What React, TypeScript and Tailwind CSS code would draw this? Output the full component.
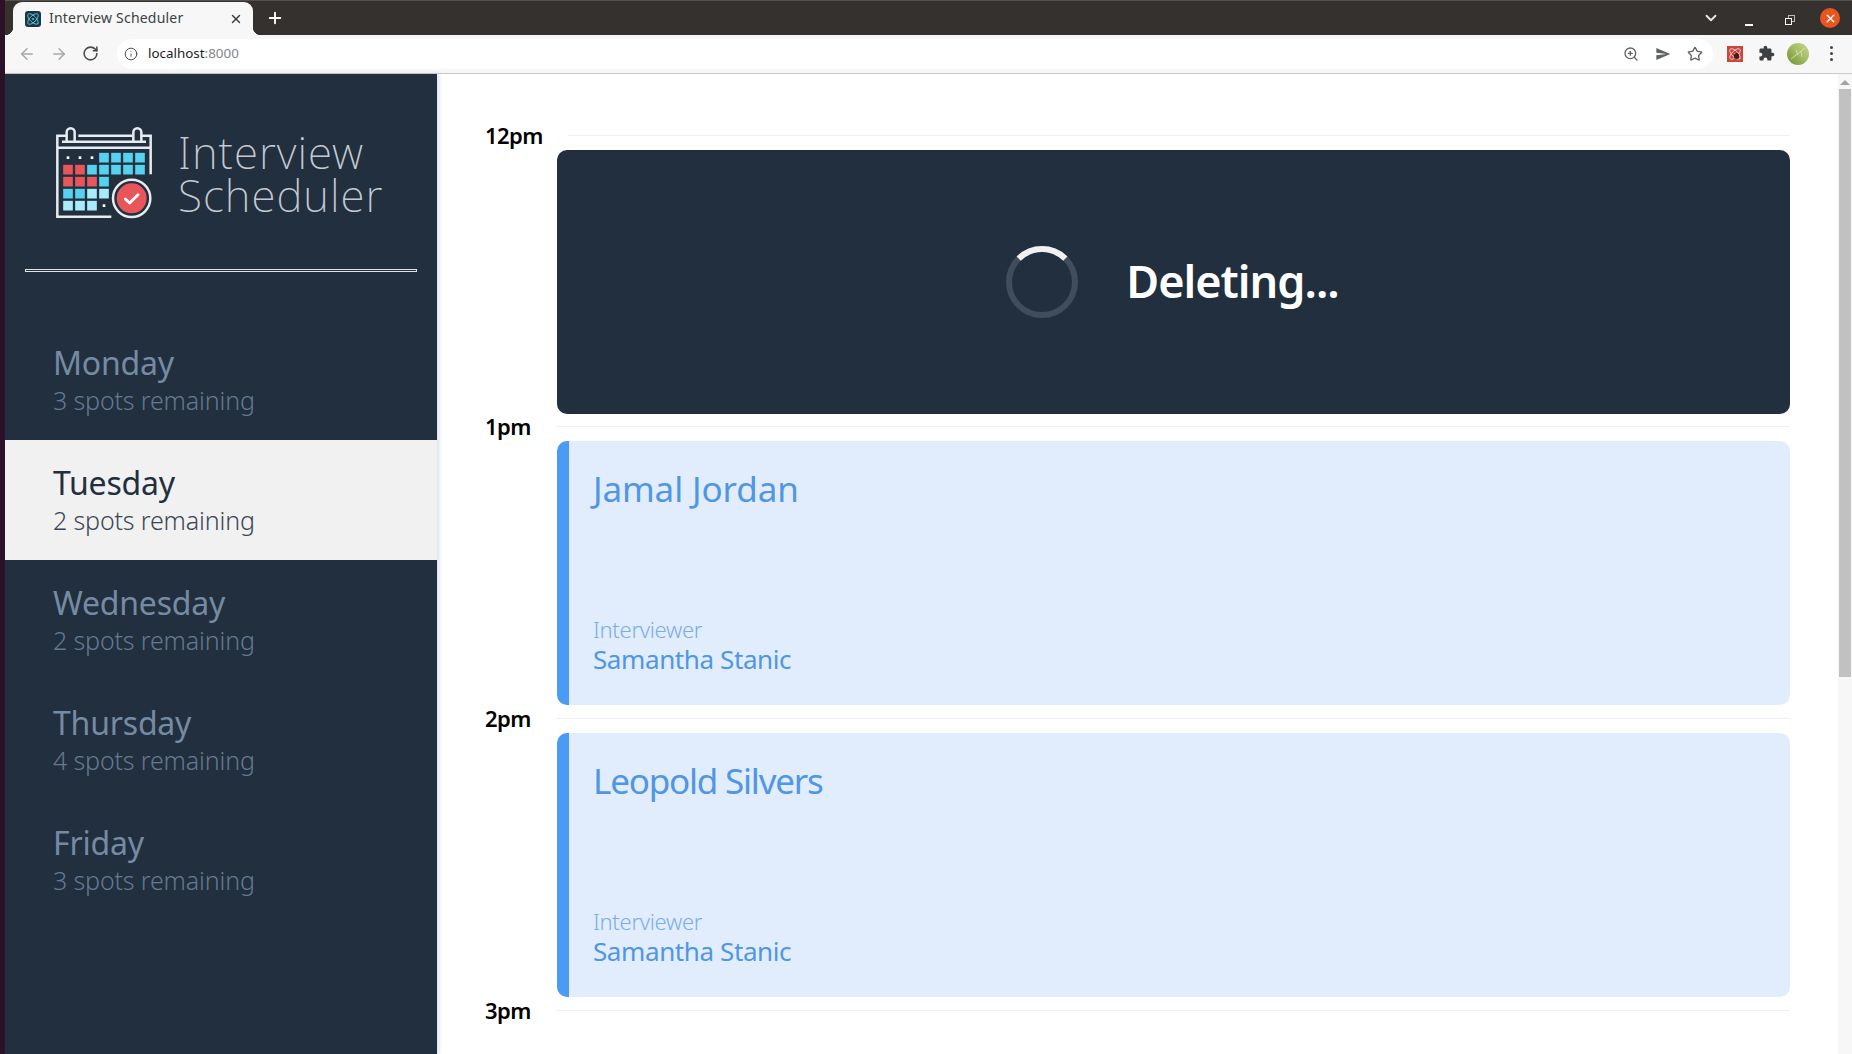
import { Atom, ArrowLeft, ArrowRight, RotateCw, Info, ZoomIn, Star, Plus, X, ChevronDown } from 'lucide-react'

const DAYS = [
  { name: 'Monday', spots: 3 },
  { name: 'Tuesday', spots: 2, selected: true },
  { name: 'Wednesday', spots: 2 },
  { name: 'Thursday', spots: 4 },
  { name: 'Friday', spots: 3 },
]

const COLS = [84, 120, 156, 192, 228, 264, 300]
const ROWS = [128, 164, 200, 236, 272]
const CYAN = '#56d2ee'
const RED = '#e8555a'
const PALE = '#a8ecfa'
const LOGO_CELLS: [number, number, string][] = [
  [3, 0, CYAN], [4, 0, CYAN], [5, 0, CYAN], [6, 0, CYAN],
  [0, 1, RED], [1, 1, RED], [2, 1, CYAN], [3, 1, CYAN], [4, 1, CYAN], [5, 1, CYAN], [6, 1, CYAN],
  [0, 2, RED], [1, 2, RED], [2, 2, RED], [3, 2, CYAN],
  [0, 3, CYAN], [1, 3, CYAN], [2, 3, PALE], [3, 3, PALE],
  [0, 4, PALE], [1, 4, PALE], [2, 4, PALE],
]

const Logo = () => (
  <svg width="98" height="92" viewBox="45 36 294 276" className="shrink-0">
    <g fill="none" stroke="#e6ecef" strokeWidth="7.5">
      <path d="M214 305H52V62H80M115 62H276M306 62H332V178" />
      <path d="M52 98H332" />
      <path d="M80 80V52a12 12 0 0 1 24 0V80M280 80V52a12 12 0 0 1 24 0V80" />
      <path d="M66 80H318" />
    </g>
    {LOGO_CELLS.map(([c, r, fill]) => (
      <rect key={`${c}-${r}`} x={COLS[c] - 14.5} y={ROWS[r] - 14.5} width="29" height="29" fill={fill} />
    ))}
    <g fill="#fff">
      <rect x="80" y="124" width="8" height="8" />
      <rect x="116" y="124" width="8" height="8" />
      <rect x="152" y="124" width="8" height="8" />
      <rect x="188" y="268" width="8" height="8" />
    </g>
    <circle cx="275" cy="250" r="63" fill="#222f3e" />
    <circle cx="275" cy="250" r="56" fill="none" stroke="#e6ecef" strokeWidth="7.5" />
    <circle cx="275" cy="250" r="45" fill={RED} />
    <path d="M256 252l13 12 25-25" fill="none" stroke="#fff" strokeWidth="8.5" strokeLinecap="round" strokeLinejoin="round" />
  </svg>
)

const Spinner = () => (
  <svg width="72" height="72" viewBox="0 0 72 72" className="shrink-0">
    <circle cx="36" cy="36" r="33" fill="none" stroke="#414d5b" strokeWidth="6" />
    <path d="M12.7 12.7A33 33 0 0 1 59.3 12.7" fill="none" stroke="#f1f1f1" strokeWidth="6" />
  </svg>
)

const ChromeBar = () => (
  <>
    <div className="flex h-[35px] items-end bg-[#35312f] border-t border-[#55514f]">
      <div className="relative ml-[8px] flex h-[33px] w-[240px] items-center rounded-t-[9px] bg-[#f7f7f7] pl-[12px] pr-[10px]">
        <div className="absolute bottom-0 left-[-8px] h-[8px] w-[8px] bg-[radial-gradient(circle_at_0_0,#35312f_8px,#f7f7f7_8.5px)]" />
        <div className="absolute bottom-0 right-[-8px] h-[8px] w-[8px] bg-[radial-gradient(circle_at_100%_0,#35312f_8px,#f7f7f7_8.5px)]" />
        <div className="flex h-[16px] w-[16px] items-center justify-center rounded-[3px] bg-[#1d3540]">
          <Atom size={14} strokeWidth={1.5} className="text-[#61dafb]" />
        </div>
        <span className="ml-[8px] flex-1 pb-[1px] text-[14px] leading-none tracking-[0.2px] text-[#3c4043]">Interview Scheduler</span>
        <X size={14} strokeWidth={2.5} className="text-[#3c4043]" />
      </div>
      <Plus size={18} strokeWidth={2.5} className="mb-[8px] ml-[13px] text-white" />
      <div className="flex-1" />
      <ChevronDown size={18} strokeWidth={2.5} className="mb-[8px] text-[#e8e8e8]" />
      <div className="mb-[9px] ml-[25px] h-[2px] w-[8px] bg-white" />
      <div className="relative mb-[10px] ml-[32px] h-[10px] w-[10px]">
        <div className="absolute right-0 top-0 h-[7px] w-[7px] border border-[#bbb]" />
        <div className="absolute bottom-0 left-0 h-[7px] w-[7px] border border-white bg-[#35312f]" />
      </div>
      <div className="mb-[7px] ml-[25px] mr-[12px] flex h-[20px] w-[20px] items-center justify-center rounded-full bg-[#e95420]">
        <X size={13} strokeWidth={2.5} className="text-white" />
      </div>
    </div>
    <div className="flex h-[39px] items-center border-b border-[#c9c9c9] bg-[#f7f7f7] pb-[1px]">
      <ArrowLeft size={18} strokeWidth={2} className="ml-[13px] text-[#a8a8a8]" />
      <ArrowRight size={18} strokeWidth={2} className="ml-[14px] text-[#a8a8a8]" />
      <RotateCw size={17} strokeWidth={2.2} className="ml-[14px] text-[#4a4a4a]" />
      <div className="ml-[18px] flex h-[30px] flex-1 items-center rounded-full bg-white pl-[7px] pr-[10px]">
        <Info size={14} strokeWidth={1.6} className="text-[#444]" />
        <span className="ml-[10px] flex-1 text-[13.4px] leading-none text-[#202124]">
          localhost<span className="text-[#80868b]">:8000</span>
        </span>
        <ZoomIn size={16} strokeWidth={2} className="text-[#5f6368]" />
        <svg width="16" height="16" viewBox="0 0 24 24" className="ml-[16px]">
          <path d="M2 21L23 12 2 3v7l15 2-15 2z" fill="#5f6368" />
        </svg>
        <Star size={16} strokeWidth={2} className="ml-[16px] text-[#5f6368]" />
      </div>
      <div className="relative ml-[14px] flex h-[16px] w-[16px] items-center justify-center bg-[#c9483d]">
        <Atom size={14} strokeWidth={1.5} className="text-[#f6dcd8]" />
        <div className="absolute bottom-[3px] right-[4px] h-[6px] w-[5px] rounded-full bg-[#3a1f1c]" />
      </div>
      <svg width="17" height="17" viewBox="0 0 24 24" className="ml-[15px]">
        <path
          d="M20.5 11H19V7c0-1.1-.9-2-2-2h-4V3.5C13 2.12 11.88 1 10.5 1S8 2.12 8 3.5V5H4c-1.1 0-1.99.9-1.99 2v3.8H3.5c1.49 0 2.7 1.21 2.7 2.7s-1.21 2.7-2.7 2.7H2V20c0 1.1.9 2 2 2h3.8v-1.5c0-1.49 1.21-2.7 2.7-2.7 1.49 0 2.7 1.21 2.7 2.7V22H17c1.1 0 2-.9 2-2v-4h1.5c1.38 0 2.5-1.12 2.5-2.5S21.88 11 20.5 11z"
          fill="#3c4043"
        />
      </svg>
      <svg width="22" height="22" viewBox="0 0 22 22" className="ml-[12px]">
        <defs>
          <linearGradient id="leaf" x1="0" y1="1" x2="1" y2="0">
            <stop offset="0" stopColor="#6f8f2e" />
            <stop offset="0.55" stopColor="#a3bd66" />
            <stop offset="1" stopColor="#c9d89a" />
          </linearGradient>
        </defs>
        <circle cx="11" cy="11" r="11" fill="url(#leaf)" />
        <path d="M4 16L18 5M9 7l2 5M15 14l-1-6" stroke="#dde7ba" strokeWidth="0.8" fill="none" />
      </svg>
      <div className="ml-[21px] mr-[19px] flex flex-col gap-[3px]">
        <div className="h-[3px] w-[3px] rounded-full bg-[#444]" />
        <div className="h-[3px] w-[3px] rounded-full bg-[#444]" />
        <div className="h-[3px] w-[3px] rounded-full bg-[#444]" />
      </div>
    </div>
  </>
)

const DayItem = ({ name, spots, selected }: { name: string; spots: number; selected?: boolean }) => (
  <li className={`flex h-[120px] flex-col justify-center pl-[48px] ${selected ? 'bg-[#f1f1f2] text-[#222f3e]' : 'text-[#758ba3]'}`}>
    <h2 className="text-[32px] font-normal leading-[39px] tracking-[-0.2px]">{name}</h2>
    <h3 className={`mt-[2px] text-[25px] font-light leading-[33px] tracking-[-0.15px] ${selected ? 'text-[#3a4655]' : 'text-[#64798f]'}`}>{spots} spots remaining</h3>
  </li>
)

const SlotHeader = ({ time }: { time: string }) => (
  <div className="mb-[7px] flex h-[16px] items-center gap-[25px]">
    <span className="text-[22px] font-semibold leading-none tracking-[-0.6px] text-black">{time}</span>
    <div className="h-px flex-1 bg-[#f0f0f0]" />
  </div>
)

const Booked = ({ student, nameClass }: { student: string; nameClass: string }) => (
  <div className="mb-[5px] ml-[72px] flex h-[264px] flex-col justify-between rounded-[10px] border-l-[12px] border-[#4a9bf5] bg-[#e1edfc] pb-[31px] pl-[24px] pt-[23px] text-[#5096e4]">
    <h2 className={`text-[35px] font-normal leading-[50px] ${nameClass}`}>{student}</h2>
    <div>
      <h4 className="text-[22px] font-light leading-[30px] tracking-[-0.3px] text-[#7aaee8]">Interviewer</h4>
      <h3 className="text-[26px] font-normal leading-[30px] tracking-[-0.4px]">Samantha Stanic</h3>
    </div>
  </div>
)

export default function App() {
  return (
    <div className="flex h-[1054px] w-[1852px] overflow-hidden bg-white font-['Noto_Sans',sans-serif]">
      <div className="w-[5px] shrink-0 bg-[#2c1128]" />
      <div className="flex min-w-0 flex-1 flex-col">
        <ChromeBar />
        <div className="flex min-h-0 flex-1">
          <aside className="w-[432px] shrink-0 bg-[#222f3e] shadow-[2px_0_4px_rgba(100,130,170,0.25)]">
            <div className="ml-[50px] mt-[53px] flex items-center gap-[25px]">
              <Logo />
              <div className="pt-[1px] text-[44px] font-extralight leading-[43px] tracking-[1px] text-[#c3cad1]">
                Interview
                <br />
                Scheduler
              </div>
            </div>
            <div className="ml-[20px] mt-[50px] h-[3px] w-[392px] border border-[#dfe3e6] bg-[#222f3e]" />
            <ul className="mt-[48px]">
              {DAYS.map((d) => (
                <DayItem key={d.name} {...d} />
              ))}
            </ul>
          </aside>
          <main className="min-w-0 flex-1 overflow-hidden pl-[48px] pr-[48px] pt-[53px]">
            <SlotHeader time="12pm" />
            <div className="mb-[4px] ml-[72px] flex h-[264px] items-center justify-center gap-[48px] rounded-[10px] bg-[#222f3e] pr-[2px]">
              <Spinner />
              <h1 className="pb-[4px] text-[45px] font-semibold leading-none tracking-[-1px] text-white">Deleting...</h1>
            </div>
            <SlotHeader time="1pm" />
            <Booked student="Jamal Jordan" nameClass="tracking-[-0.1px]" />
            <SlotHeader time="2pm" />
            <Booked student="Leopold Silvers" nameClass="tracking-[-1.2px]" />
            <SlotHeader time="3pm" />
          </main>
          <div className="flex w-[14px] shrink-0 flex-col items-center bg-[#f7f7f7] pt-[6px]">
            <div className="h-0 w-0 border-x-[5px] border-b-[5px] border-x-transparent border-b-[#a3a3a3]" />
            <div className="mt-[4px] h-[588px] w-[12px] bg-[#c1c1c1]" />
          </div>
        </div>
      </div>
    </div>
  )
}
